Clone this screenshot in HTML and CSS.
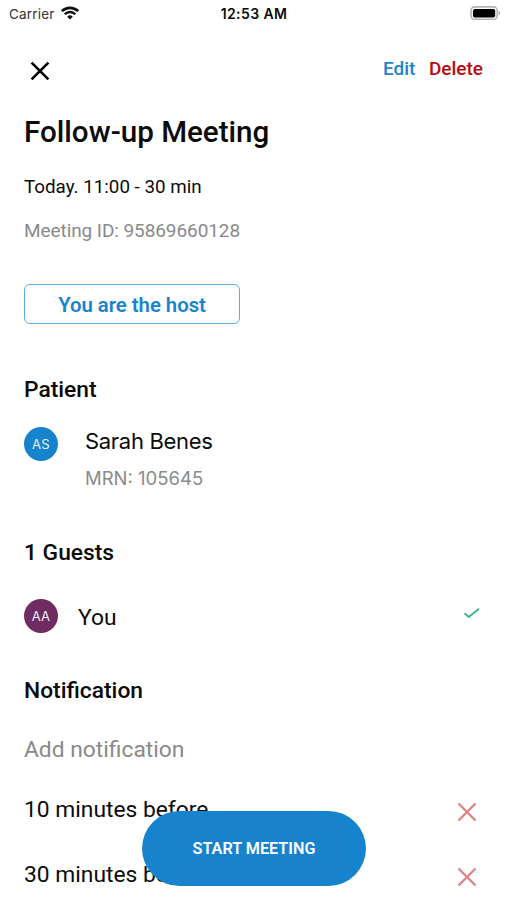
FILE: index.html
```
<!DOCTYPE html>
<html lang="en">
<head>
  <meta charset="UTF-8">
  <meta name="viewport" content="width=device-width, initial-scale=1.0">
  <title>Follow-up Meeting</title>
  <link rel="stylesheet" href="styles.css">
</head>
<body>
<div class="status-bar">
  <div class="carrier">
    <span class="carrier-name">Carrier</span>
    <svg class="wifi" viewBox="0 0 18 14" width="18" height="14">
      <path d="M0.9 5.1a11.6 11.6 0 0 1 16.2 0" fill="none" stroke="#111" stroke-width="2.8"/>
      <path d="M3.7 8.3a7.3 7.3 0 0 1 10.6 0" fill="none" stroke="#111" stroke-width="2.3"/>
      <path d="M6.2 10.7a4 4 0 0 1 5.6 0L9 13.6z" fill="#111"/>
    </svg>
  </div>
  <div class="clock">12:53 AM</div>
  <svg class="battery" viewBox="0 0 31 14" width="31" height="14">
    <rect x="1" y="0.9" width="26.2" height="12.4" rx="3.6" fill="#fff" stroke="#b4b4b4" stroke-width="1.6"/>
    <rect x="3" y="2.9" width="22.2" height="8.6" rx="1.8" fill="#000"/>
    <path d="M28.6 5v4.4c1-.4 1.6-1.2 1.6-2.2s-.6-1.8-1.6-2.2z" fill="#aaa"/>
  </svg>
</div>

<div class="toolbar">
  <svg class="close" viewBox="0 0 20 20" width="20" height="20">
    <path d="M1.6 1.6l16.8 16.8M18.4 1.6L1.6 18.4" stroke="#000" stroke-width="2.6"/>
  </svg>
  <div class="actions">
    <a href="#" class="edit">Edit</a>
    <a href="#" class="delete">Delete</a>
  </div>
</div>

<main class="meeting">
  <h1 class="title">Follow-up Meeting</h1>
  <div class="time">Today. 11:00 - 30 min</div>
  <div class="meeting-id">Meeting ID: 95869660128</div>
  <div class="host-badge">You are the host</div>

  <h2 class="section-title">Patient</h2>
  <div class="person patient">
    <div class="avatar">AS</div>
    <div class="person-info">
      <div class="patient-name">Sarah Benes</div>
      <div class="mrn">MRN: 105645</div>
    </div>
  </div>

  <h2 class="section-title">1 Guests</h2>
  <div class="person guest">
    <div class="avatar purple">AA</div>
    <div class="guest-name">You</div>
    <svg class="check" viewBox="0 0 18 12" width="18" height="12">
      <path d="M1.5 6.3l4.2 3.7L16 1.7" fill="none" stroke="#3db489" stroke-width="1.8"/>
    </svg>
  </div>

  <h2 class="section-title">Notification</h2>
  <div class="add-notification">Add notification</div>
  <div class="notification">
    <span>10 minutes before</span>
    <svg class="remove" viewBox="0 0 20 20" width="20" height="20">
      <path d="M1.5 1.5l17 17M18.5 1.5l-17 17" stroke="#e08486" stroke-width="2.4"/>
    </svg>
  </div>
  <div class="notification">
    <span>30 minutes before</span>
    <svg class="remove" viewBox="0 0 20 20" width="20" height="20">
      <path d="M1.5 1.5l17 17M18.5 1.5l-17 17" stroke="#e08486" stroke-width="2.4"/>
    </svg>
  </div>
</main>

<button class="start-button">START MEETING</button>
</body>
</html>
```

FILE: styles.css
```
* {
  margin: 0;
  padding: 0;
  box-sizing: border-box;
}

body {
  width: 507px;
  height: 900px;
  overflow: hidden;
  position: relative;
  background: #fff;
  color: #0b0b0b;
  font-family: Roboto, sans-serif;
  white-space: nowrap;
}

/* Phone status bar */
.status-bar {
  display: grid;
  grid-template-columns: 1fr auto 1fr;
  align-items: center;
  height: 28px;
  padding: 0 6px 0 9px;
  font-family: Inter, sans-serif;
  font-size: 13.5px;
}

.carrier {
  display: flex;
  align-items: center;
  gap: 6px;
  color: #333;
}

.carrier-name {
  letter-spacing: 0.2px;
}

.wifi {
  margin-top: -3px;
}

.clock {
  margin: -2px 2px 0 0;
  font-size: 14px;
  font-weight: 600;
  letter-spacing: 0.4px;
}

.battery {
  justify-self: end;
  margin-top: -2px;
}

/* Close, edit and delete */
.toolbar {
  display: flex;
  justify-content: space-between;
  align-items: flex-start;
  height: 82px;
  padding: 33px 24px 0 30px;
}

.actions {
  display: flex;
  gap: 13.5px;
  margin-top: -4px;
  font-size: 19px;
  font-weight: 500;
  line-height: 24px;
}

.actions a {
  text-decoration: none;
}

.edit {
  color: #1d86cb;
}

.delete {
  color: #b80c10;
}

.meeting {
  padding: 0 24px;
}

.title {
  font-size: 29.6px;
  font-weight: 500;
  line-height: 44px;
}

.time {
  margin-top: 21px;
  font-size: 18.8px;
  line-height: 24px;
}

.meeting-id {
  margin-top: 20px;
  color: #8a8a8a;
  font-size: 19px;
  letter-spacing: -0.08px;
  line-height: 24px;
}

.host-badge {
  width: 216px;
  height: 40px;
  margin-top: 41px;
  border: 1.5px solid #62a9dc;
  border-radius: 6px;
  color: #1783cc;
  font-size: 20.3px;
  font-weight: 600;
  line-height: 40px;
  text-align: center;
}

.section-title {
  font-size: 22.8px;
  font-weight: 500;
  line-height: 32px;
}

.host-badge + .section-title {
  margin-top: 50px;
}

/* Patient and guests */
.person {
  display: flex;
}

.avatar {
  width: 34px;
  height: 34px;
  border-radius: 50%;
  background: #1783cc;
  color: #e4f1fa;
  font-family: Inter, sans-serif;
  font-size: 13px;
  letter-spacing: 0.3px;
  line-height: 34px;
  text-align: center;
}

.avatar.purple {
  background: #702b61;
}

.patient {
  height: 131px;
  padding-top: 21px;
}

.person-info {
  margin: -3px 0 0 27px;
  font-family: Inter, sans-serif;
}

.patient-name {
  font-size: 22px;
  letter-spacing: -0.3px;
  line-height: 34px;
}

.mrn {
  margin-top: 5px;
  color: #8a8a8a;
  font-size: 18.5px;
  line-height: 30px;
}

.guest {
  height: 106px;
  padding: 30px 2px 0 0;
}

.guest-name {
  flex: 1;
  margin-left: 20px;
  font-size: 22.8px;
  line-height: 37px;
}

.check {
  margin-top: 8px;
}

/* Notifications */
.add-notification {
  margin-top: 28px;
  color: #8a8a8a;
  font-size: 22.8px;
  line-height: 30px;
}

.notification {
  display: flex;
  justify-content: space-between;
  align-items: center;
  height: 34px;
  margin-top: 27px;
  padding-right: 6px;
  font-size: 22.8px;
}

.notification + .notification {
  margin-top: 31px;
}

.remove {
  margin-top: 5px;
}

.start-button {
  position: absolute;
  left: 142px;
  bottom: 14px;
  width: 224px;
  height: 75px;
  border: none;
  border-radius: 38px;
  background: #1783cc;
  color: #fff;
  font-family: Roboto, sans-serif;
  font-size: 16.2px;
  font-weight: 600;
}
```
